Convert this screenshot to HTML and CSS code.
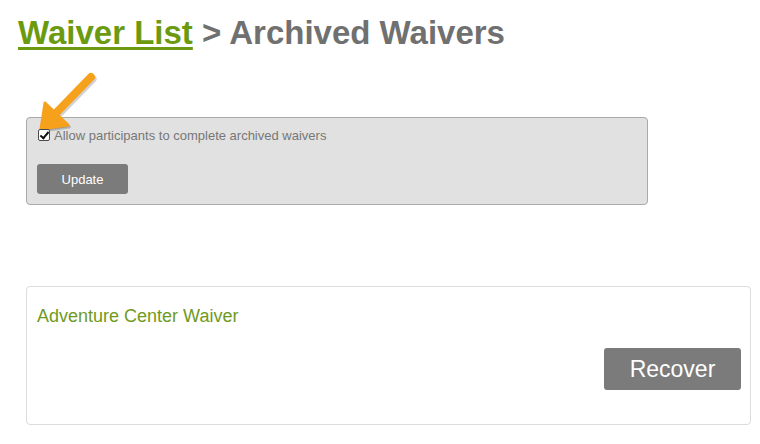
FILE: index.html
```html
<!DOCTYPE html>
<html lang="en">
<head>
    <meta charset="UTF-8">
    <meta name="viewport" content="width=device-width, initial-scale=1.0">
    <title>Archived Waivers</title>
    <link rel="stylesheet" href="styles.css">
</head>
<body>
    <h1 class="page-title">
        <a href="#" class="crumb-link">Waiver List</a> &gt; Archived Waivers
    </h1>

    <div class="settings-box">
        <!-- callout arrow pointing at the checkbox -->
        <svg class="callout-arrow" width="64" height="64" viewBox="0 0 64 64">
            <g class="arrow-shadow" transform="translate(1.5 2)">
                <line x1="22" y1="40" x2="56" y2="5" stroke-width="8" stroke-linecap="round"/>
                <polygon points="6,57 10,31 33,53" stroke-linejoin="round" stroke-width="3"/>
            </g>
            <g class="arrow-body">
                <line x1="22" y1="40" x2="56" y2="5" stroke-width="8" stroke-linecap="round"/>
                <polygon points="6,57 10,31 33,53" stroke-linejoin="round" stroke-width="3"/>
            </g>
        </svg>
        <label class="check-row">
            <input type="checkbox" class="check" checked>
            <span>Allow participants to complete archived waivers</span>
        </label>
        <button type="button" class="btn btn-update">Update</button>
    </div>

    <div class="waiver-card">
        <div class="waiver-name">Adventure Center Waiver</div>
        <div class="card-actions">
            <button type="button" class="btn btn-recover">Recover</button>
        </div>
    </div>
</body>
</html>
```

FILE: styles.css
```css
* {
    margin: 0;
    padding: 0;
    box-sizing: border-box;
}

body {
    font-family: 'Liberation Sans', Arial, sans-serif;
    background-color: #fff;
    color: #777;
}

.page-title {
    margin: 14px 0 0 18px;
    font-size: 33px;
    line-height: 37px;
    font-weight: bold;
    color: #707070;
}

.crumb-link {
    color: #6b9a10;
    text-decoration: underline;
    text-decoration-thickness: 3px;
    text-underline-offset: 3px;
}

.settings-box {
    position: relative;
    width: 622px;
    margin: 66px 0 0 26px;
    padding: 10px;
    background-color: #e1e1e1;
    border: 1px solid #a9a9a9;
    border-radius: 4px;
}

.callout-arrow {
    position: absolute;
    left: 8px;
    top: -46px;
    overflow: visible;
}

.arrow-shadow line,
.arrow-shadow polygon {
    stroke: rgba(0, 0, 0, 0.18);
    fill: rgba(0, 0, 0, 0.18);
}

.arrow-body line,
.arrow-body polygon {
    stroke: #f6a11c;
    fill: #f6a11c;
}

.check-row {
    display: flex;
    align-items: center;
    height: 14px;
    font-size: 13px;
    color: #777;
}

.check {
    appearance: none;
    -webkit-appearance: none;
    position: relative;
    width: 12px;
    height: 12px;
    margin: 0 4px 0 1px;
    background-color: #fff;
    border: 1px solid #4a4a4a;
    border-radius: 2px;
}

.check:checked::after {
    content: '';
    position: absolute;
    left: 3px;
    top: 0;
    width: 3px;
    height: 7px;
    border-right: 2px solid #111;
    border-bottom: 2px solid #111;
    transform: rotate(40deg);
}

.btn {
    display: block;
    background-color: #7b7b7b;
    color: #fff;
    border: none;
    border-radius: 3px;
    font-family: 'Liberation Sans', Arial, sans-serif;
    cursor: pointer;
}

.btn:hover {
    background-color: #666;
}

.btn-update {
    width: 91px;
    height: 30px;
    margin-top: 22px;
    font-size: 13px;
}

.waiver-card {
    margin: 81px 9px 0 26px;
    padding: 18px 9px 34px 10px;
    border: 1px solid #dcdcdc;
    border-radius: 4px;
}

.waiver-name {
    font-size: 18px;
    line-height: 22px;
    color: #6f9a1e;
}

.card-actions {
    display: flex;
    justify-content: flex-end;
    margin-top: 21px;
}

.btn-recover {
    width: 137px;
    height: 42px;
    font-size: 23px;
}
```
